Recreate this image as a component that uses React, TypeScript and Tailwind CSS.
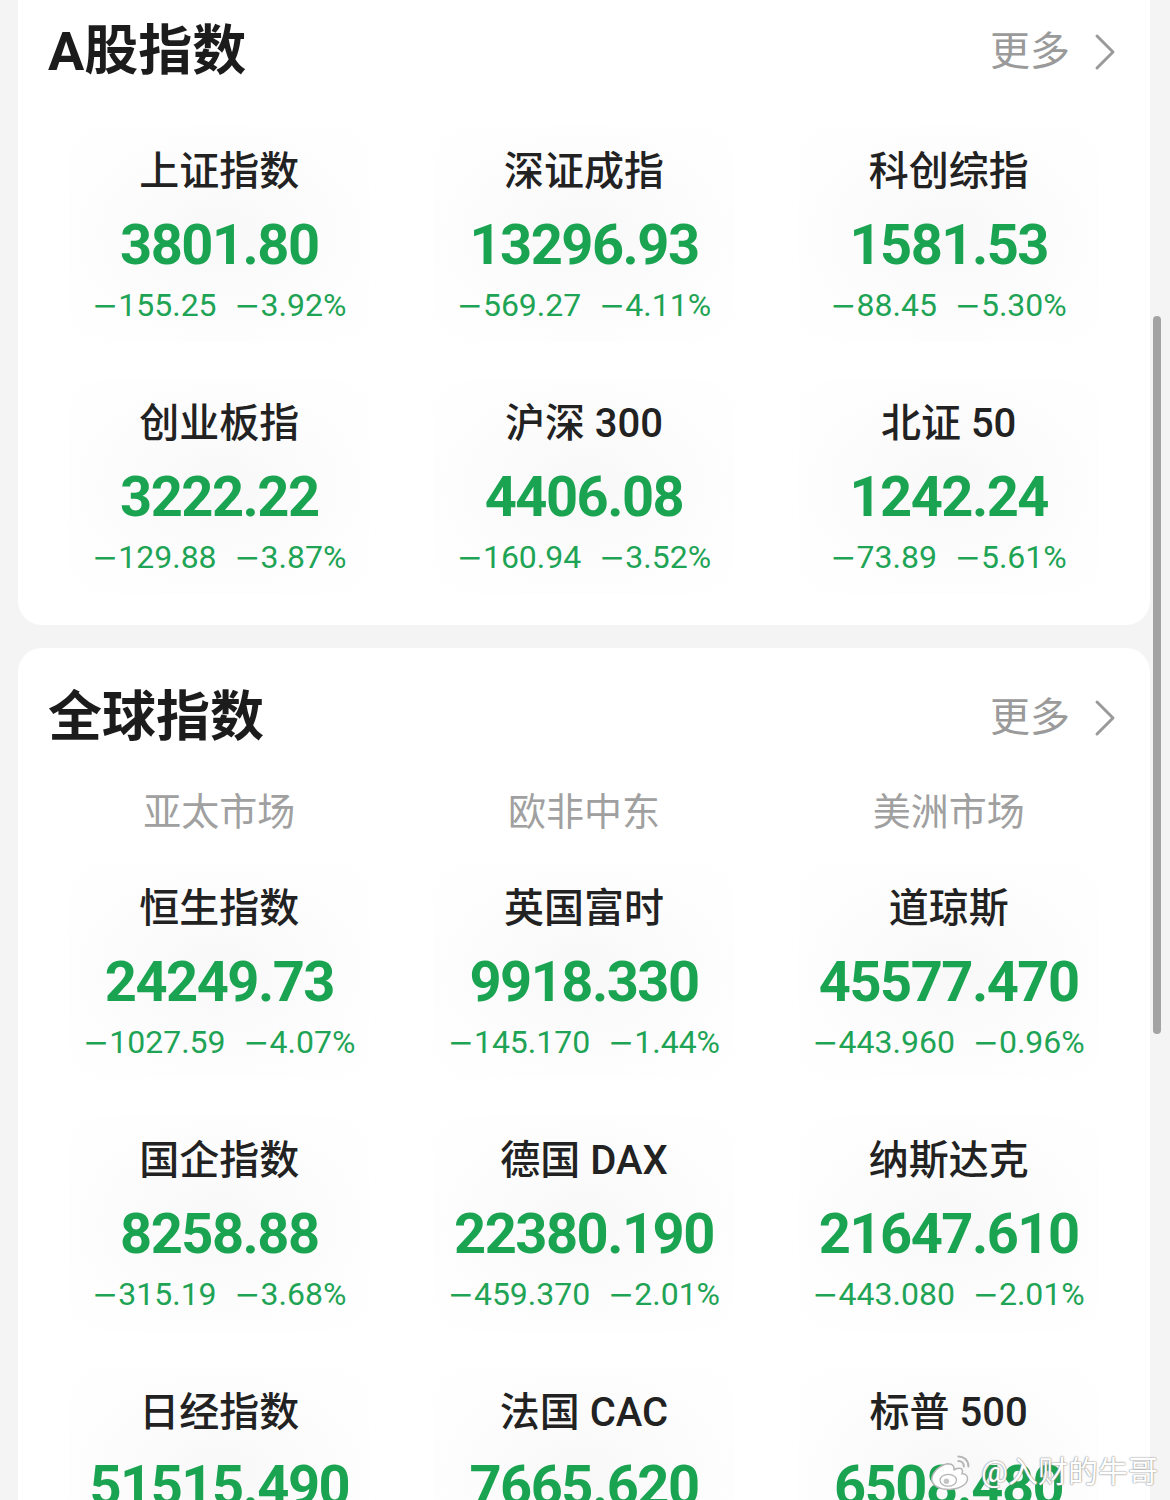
import React from "react";
import { ChevronRight } from "lucide-react";

type Quote = { name: string; value: string; change: string; pct: string };

const aShares: Quote[] = [
  { name: "上证指数", value: "3801.80", change: "155.25", pct: "3.92%" },
  { name: "深证成指", value: "13296.93", change: "569.27", pct: "4.11%" },
  { name: "科创综指", value: "1581.53", change: "88.45", pct: "5.30%" },
  { name: "创业板指", value: "3222.22", change: "129.88", pct: "3.87%" },
  { name: "沪深 300", value: "4406.08", change: "160.94", pct: "3.52%" },
  { name: "北证 50", value: "1242.24", change: "73.89", pct: "5.61%" },
];

const globalIdx: Quote[] = [
  { name: "恒生指数", value: "24249.73", change: "1027.59", pct: "4.07%" },
  { name: "英国富时", value: "9918.330", change: "145.170", pct: "1.44%" },
  { name: "道琼斯", value: "45577.470", change: "443.960", pct: "0.96%" },
  { name: "国企指数", value: "8258.88", change: "315.19", pct: "3.68%" },
  { name: "德国 DAX", value: "22380.190", change: "459.370", pct: "2.01%" },
  { name: "纳斯达克", value: "21647.610", change: "443.080", pct: "2.01%" },
  { name: "日经指数", value: "51515.490", change: "", pct: "" },
  { name: "法国 CAC", value: "7665.620", change: "", pct: "" },
  { name: "标普 500", value: "6508.480", change: "", pct: "" },
];

const font = "font-['Roboto','Noto_Sans_CJK_SC',sans-serif]";

// the app's minus is a long dash; DejaVu's glyph is the closest in length
const Minus = () => <span className="font-['DejaVu_Sans',sans-serif] text-[31px]">−</span>;

const QuoteCell = ({ q }: { q: Quote }) => (
  <div className="h-[252px] flex justify-center">
    <div className="w-[300px] h-[215px] -mt-[20px] pt-[20px] flex flex-col items-center rounded-[24px] bg-[radial-gradient(ellipse_at_center,#f8f8f8_0%,#fdfdfd_60%,#ffffff_100%)]">
      <div className="h-[50px] leading-[50px] text-[40px] font-medium text-[#222] whitespace-nowrap">
        {q.name}
      </div>
      <div className="mt-[15px] h-[66px] leading-[66px] text-[56px] font-bold tracking-[-1.5px] text-[#1aa350] whitespace-nowrap">
        {q.value}
      </div>
      {q.change && (
        <div className="mt-[7px] h-[40px] leading-[40px] text-[32px] text-[#1fa456] flex gap-[18px] whitespace-nowrap">
          <span>
            <Minus />
            {q.change}
          </span>
          <span>
            <Minus />
            {q.pct}
          </span>
        </div>
      )}
    </div>
  </div>
);

const SectionHeader = ({ title }: { title: string }) => (
  <div className="h-[60px] flex items-center justify-between pl-[30px] pr-[13px]">
    <h2 className="text-[54px] leading-[60px] font-bold text-[#1c1c1c]">{title}</h2>
    <div className="flex items-center gap-[3px] text-[#9a9a9a]">
      <span className="text-[40px] leading-[60px]">更多</span>
      <ChevronRight size={64} strokeWidth={1.1} className="-my-[2px]" />
    </div>
  </div>
);

const WeiboLogo = () => (
  <svg width="44" height="40" viewBox="0 0 48 42" fill="none">
    <path
      d="M20 12c-9 2-17 10-17 17 0 7 9 11 19 11 12 0 20-6 20-12 0-4-4-5-6-5 1-3 1-6-3-6-2 0-5 1-6 2 1-3 0-7-7-7z"
      fill="#ffffff"
      stroke="#b5b5b5"
      strokeWidth="1.6"
    />
    <ellipse cx="21" cy="30" rx="9" ry="6.5" fill="#ffffff" stroke="#b5b5b5" strokeWidth="1.4" />
    <circle cx="19" cy="31" r="3" fill="#c4c4c4" />
    <path d="M32 4c6 0 11 4 11 11" stroke="#b5b5b5" strokeWidth="2.2" strokeLinecap="round" />
    <path d="M32 9c3 0 6 2 6 6" stroke="#b5b5b5" strokeWidth="2.2" strokeLinecap="round" />
  </svg>
);

export default function App() {
  return (
    <div className={`relative h-[1500px] overflow-hidden bg-[#f4f4f4] pl-[18px] pr-[20px] ${font}`}>
      <section className="bg-white rounded-b-[24px] pt-[22px] h-[625px]">
        <SectionHeader title="A股指数" />
        <div className="grid grid-cols-3 px-[19px] mt-[65px]">
          {aShares.map((q) => (
            <QuoteCell key={q.name} q={q} />
          ))}
        </div>
      </section>

      <section className="mt-[23px] bg-white rounded-t-[24px] pt-[40px] h-[900px]">
        <SectionHeader title="全球指数" />
        <div className="grid grid-cols-3 px-[19px] mt-[40px]">
          {["亚太市场", "欧非中东", "美洲市场"].map((t) => (
            <div key={t} className="text-center text-[38px] leading-[48px] text-[#a0a0a0]">
              {t}
            </div>
          ))}
        </div>
        <div className="grid grid-cols-3 px-[19px] mt-[48px]">
          {globalIdx.map((q) => (
            <QuoteCell key={q.name} q={q} />
          ))}
        </div>
      </section>

      <div className="absolute left-[1153px] top-[316px] w-[8px] h-[718px] rounded-full bg-[#a3a3a3]" />

      <div className="absolute right-[12px] bottom-[8px] flex items-center gap-[8px]">
        <WeiboLogo />
        <span className="text-[30px] leading-[40px] text-white [text-shadow:0_0_2px_#8a8a8a,0_0_1px_#8a8a8a]">
          @入财的牛哥
        </span>
      </div>
    </div>
  );
}
